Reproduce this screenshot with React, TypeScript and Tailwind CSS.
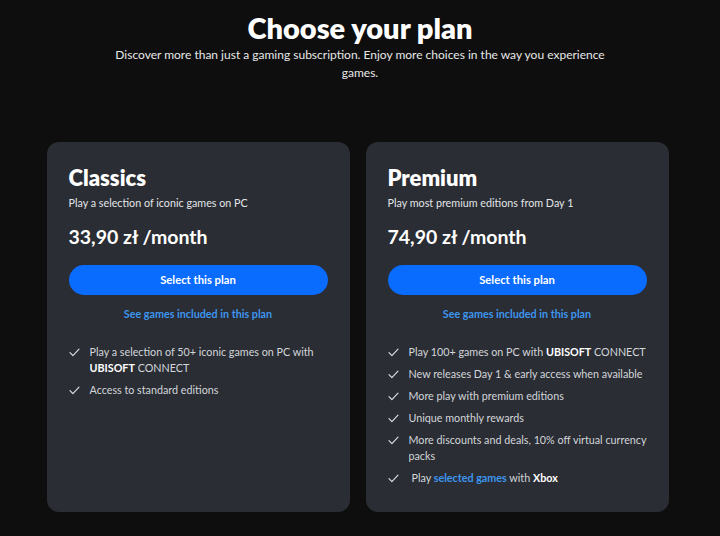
import React from "react";

function Check() {
  return (
    <svg width="11" height="9" viewBox="0 0 11 9" fill="none" className="shrink-0 mt-[4px]">
      <path d="M1 4.6 L3.9 7.6 L10 1.2" stroke="#d9dce0" strokeWidth="1.2" strokeLinecap="round" strokeLinejoin="round" />
    </svg>
  );
}

function Item({ children }: { children: React.ReactNode }) {
  return (
    <li className="flex gap-[10px]">
      <Check />
      <span className="text-[10.75px] leading-[16px] text-[#d3d6db]">{children}</span>
    </li>
  );
}

function Card({
  title,
  desc,
  price,
  items,
}: {
  title: string;
  desc: string;
  price: string;
  items: React.ReactNode[];
}) {
  return (
    <div className="w-[303px] h-[370px] rounded-[12px] bg-[#2a2d33] px-[22px] pt-[23px]">
      <h2 className="text-[22px] leading-[26px] font-extrabold text-white">{title}</h2>
      <p className="mt-[5px] text-[10.75px] leading-[14px] text-[#e3e5e8]">{desc}</p>
      <div className="mt-[15px] text-[19.5px] leading-[24px] font-bold text-white">{price}</div>
      <button className="mt-[16px] w-full h-[30px] rounded-full bg-[#0a6cff] text-white text-[11.25px] font-bold">
        Select this plan
      </button>
      <div className="mt-[12px] text-center text-[10.75px] leading-[14px] font-bold text-[#3d96f0]">
        See games included in this plan
      </div>
      <ul className="mt-[23px] flex flex-col gap-[6px]">
        {items.map((it, i) => (
          <Item key={i}>{it}</Item>
        ))}
      </ul>
    </div>
  );
}

export default function App() {
  const ubi = (
    <>
      <span className="font-bold text-white">UBISOFT</span> CONNECT
    </>
  );
  return (
    <div className="min-h-[536px] bg-[#0e0e0e] font-['Lato',sans-serif] flex flex-col items-center">
      <h1 className="mt-[10px] text-[29px] leading-[35px] font-extrabold text-white">Choose your plan</h1>
      <p className="mt-[1px] w-[500px] text-center text-[12px] leading-[18px] text-[#e8e8e8]">
        Discover more than just a gaming subscription. Enjoy more choices in the way you experience games.
      </p>
      <div className="mt-[60px] mr-[5px] flex gap-[16px]">
        <Card
          title="Classics"
          desc="Play a selection of iconic games on PC"
          price="33,90 zł /month"
          items={[
            <>Play a selection of 50+ iconic games on PC with {ubi}</>,
            <>Access to standard editions</>,
          ]}
        />
        <Card
          title="Premium"
          desc="Play most premium editions from Day 1"
          price="74,90 zł /month"
          items={[
            <>Play 100+ games on PC with {ubi}</>,
            <>New releases Day 1 &amp; early access when available</>,
            <>More play with premium editions</>,
            <>Unique monthly rewards</>,
            <>More discounts and deals, 10% off virtual currency packs</>,
            <span className="pl-[3px]">
              Play <span className="font-bold text-[#3d96f0]">selected games</span> with{" "}
              <span className="font-bold text-white">Xbox</span>
            </span>,
          ]}
        />
      </div>
    </div>
  );
}
